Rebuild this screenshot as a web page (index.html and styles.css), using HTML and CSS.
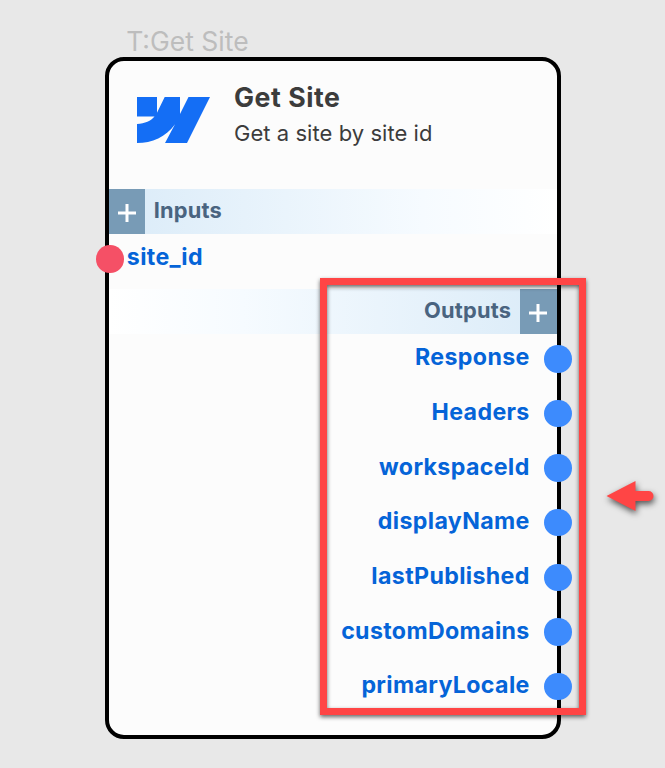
FILE: index.html
```html
<!DOCTYPE html>
<html lang="en">
<head>
<meta charset="utf-8">
<title>Get Site</title>
<link rel="stylesheet" href="styles.css">
</head>
<body>
<main class="canvas">
  <div class="node-label"><span>T:Get Site</span></div>
  <section class="node">
    <header class="node-header">
      <svg class="logo" viewBox="0 0 73 46" aria-hidden="true"><path d="M0 0H20V15.800L27.700 0H43V17L51.500 0H73L50 46H28L38 27.200C29 40 15 46 0 46V27C8 26.300 14 24 17.500 19.500H0Z"/></svg>
      <div class="heading">
        <h1 class="title"><span>Get Site</span></h1>
        <p class="subtitle"><span>Get a site by site id</span></p>
      </div>
    </header>
    <div class="bar inputs"><button class="add" aria-label="Add input"><svg viewBox="0 0 18 18"><path d="M9 0V18M0 9H18"/></svg></button><span class="bar-text">Inputs</span></div>
    <div class="row in"><i class="dot"></i><span>site_id</span></div>
    <div class="bar outputs"><span class="bar-text">Outputs</span><button class="add" aria-label="Add output"><svg viewBox="0 0 18 18"><path d="M9 0V18M0 9H18"/></svg></button></div>
    <div class="row out"><span>Response</span><i class="dot"></i></div>
    <div class="row out"><span>Headers</span><i class="dot"></i></div>
    <div class="row out"><span>workspaceId</span><i class="dot"></i></div>
    <div class="row out"><span>displayName</span><i class="dot"></i></div>
    <div class="row out"><span>lastPublished</span><i class="dot"></i></div>
    <div class="row out"><span>customDomains</span><i class="dot"></i></div>
    <div class="row out"><span>primaryLocale</span><i class="dot"></i></div>
  </section>
  <div class="highlight"></div>
  <svg class="arrow" viewBox="0 0 50 32" aria-hidden="true"><path d="M0.500 16L29.500 1V11H42.500a5 5 0 0 1 0 10H29.500V31Z"/></svg>
</main>
</body>
</html>
```
FILE: styles.css
```css
* { box-sizing: border-box; }
body { margin: 0; background: #e8e8e8; font-family: Inter, "Liberation Sans", sans-serif; }
.canvas { position: relative; width: 665px; height: 768px; padding: 25px 0 0 105.300px; overflow: hidden; }
.node-label { height: 32.300px; padding-left: 21px; font-size: 26.500px; line-height: 32px; color: #bdbdbd; white-space: nowrap; }
.node { width: 455.700px; height: 681.500px; border: 4px solid #000; border-radius: 19px; background: #fcfcfc; }
.node-header { display: flex; height: 127.500px; padding: 36px 0 0 27.700px; }
.logo { width: 73px; height: 46px; flex: none; fill: #146ef5; }
.heading { margin: -18px 0 0 24px; white-space: nowrap; }
.title { margin: 0; font-size: 26.700px; font-weight: 700; line-height: 36px; letter-spacing: .55px; color: #3c3c3c; }
.subtitle { margin: 0; font-size: 22px; line-height: 36px; letter-spacing: .05px; color: #3c3c3c; }
.bar { display: flex; height: 45.700px; }
.inputs { background: linear-gradient(90deg, #daebf8, #f6fbff 70%, #fff); }
.outputs { height: 45.400px; justify-content: flex-end; background: linear-gradient(270deg, #daebf8, #f6fbff 70%, #fff); }
.add { display: grid; place-items: center; width: 36.100px; padding: 3px 1px 0 0; border: 0; background: #789bb6; }
.outputs .add { width: 36.500px; }
.add svg { width: 18px; height: 18px; fill: none; stroke: #fff; stroke-width: 3; }
.bar-text { margin: 0 9.300px 0 8.300px; font-size: 21.800px; font-weight: 700; line-height: 42px; letter-spacing: .2px; color: #4a6480; }
.outputs .bar-text { line-height: 43px; }
.row { display: flex; height: 54.620px; font-size: 23.200px; font-weight: 700; line-height: 46px; letter-spacing: .35px; color: #0564d8; }
.dot { flex: none; width: 27.500px; height: 27.500px; margin-top: 10.600px; border-radius: 50%; background: #3d8bfd; }
.in .dot { margin-left: -13px; margin-right: 3px; background: #f55066; }
.out { justify-content: flex-end; }
.out .dot { margin-left: 14.800px; margin-right: -15px; }
.highlight { position: absolute; left: 320px; top: 278px; width: 266px; height: 437px; border: 7px solid #ff4545; filter: drop-shadow(0 2px 2px rgba(0,0,0,.6)); }
.arrow { position: absolute; left: 606px; top: 480px; width: 50px; height: 32px; overflow: visible; fill: #ff4545; filter: drop-shadow(1px 3px 3px rgba(0,0,0,.65)); }
```
